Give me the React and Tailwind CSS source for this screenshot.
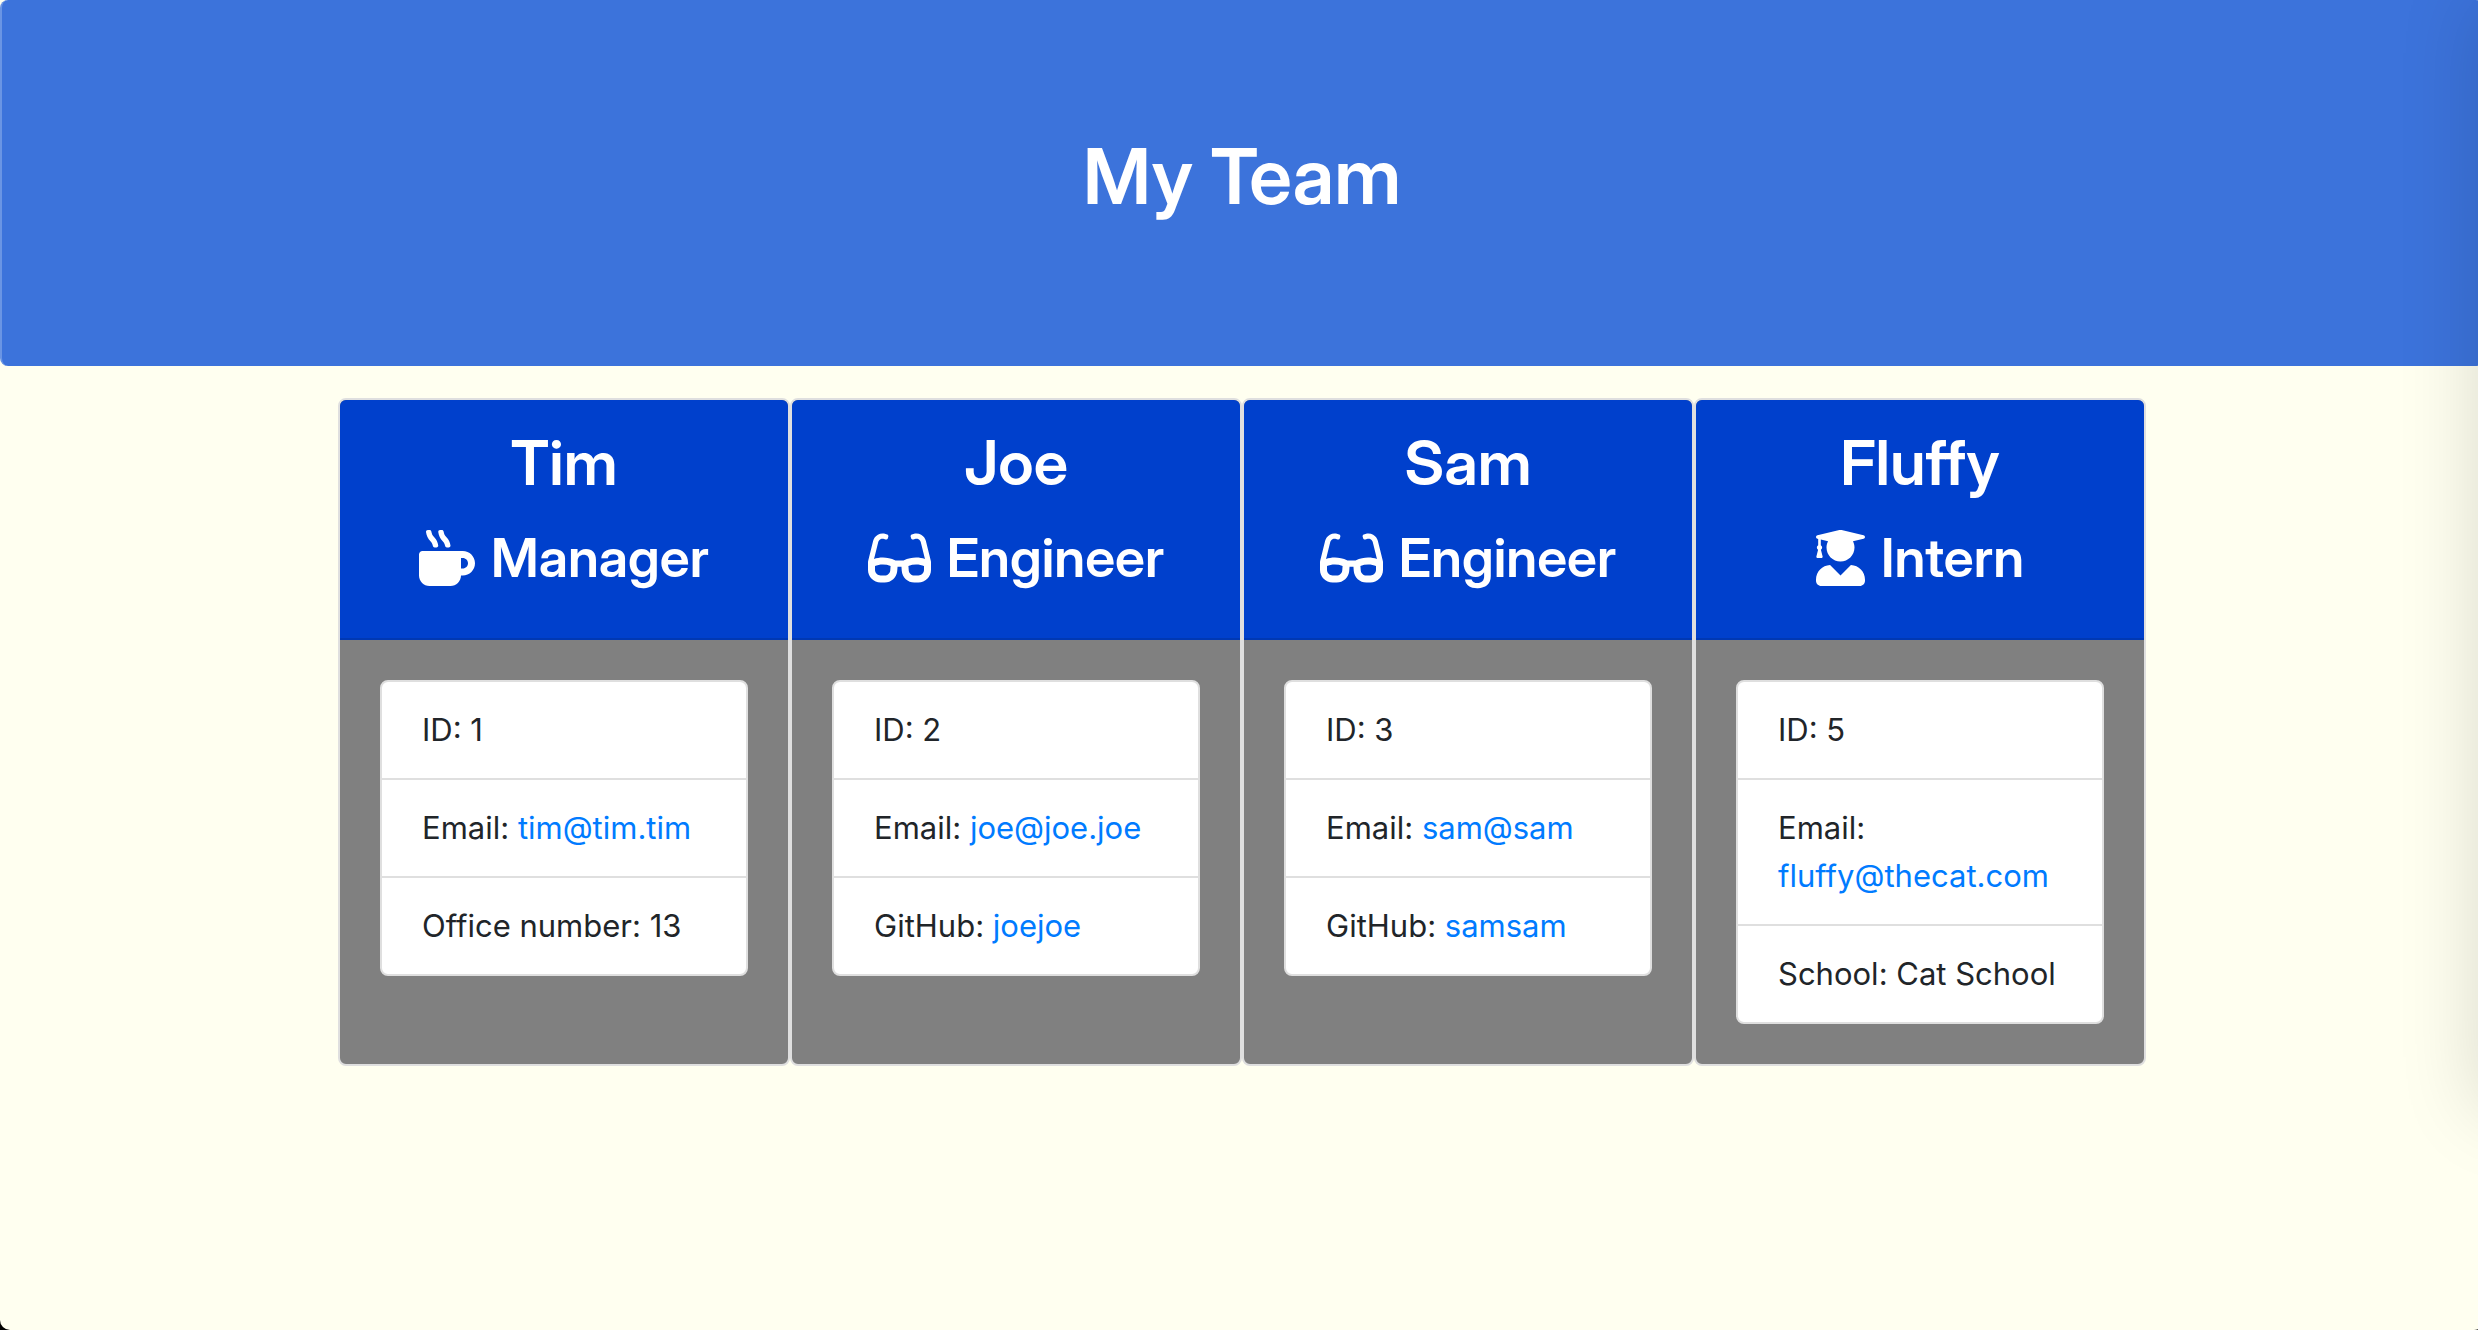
import React from "react";
import { FaMugHot, FaGlasses, FaUserGraduate } from "react-icons/fa";

const roles = {
  Manager: <FaMugHot className="h-14 w-14" aria-hidden="true" />,
  Engineer: <FaGlasses className="h-14 w-[63px]" aria-hidden="true" />,
  Intern: <FaUserGraduate className="h-14 w-[49px]" aria-hidden="true" />,
};

const team = [
  { name: "Tim", role: "Manager", id: 1, email: "tim@tim.tim", label: "Office number", value: "13" },
  { name: "Joe", role: "Engineer", id: 2, email: "joe@joe.joe", label: "GitHub", value: "joejoe", href: "https://github.com/joejoe" },
  { name: "Sam", role: "Engineer", id: 3, email: "sam@sam", label: "GitHub", value: "samsam", href: "https://github.com/samsam" },
  { name: "Fluffy", role: "Intern", id: 5, email: "fluffy@thecat.com", label: "School", value: "Cat School" },
];

function Card({ member }) {
  return (
    <article className="flex flex-col rounded-lg border-2 border-[#dfdfdf] bg-[#808080]">
      <header className="rounded-t-md border-b-2 border-[#0038b3] bg-[#0040cc] px-10 pt-6 pb-10 text-center font-['Inter_Display','Inter',sans-serif] font-semibold text-white">
        <h2 className="mb-4 text-[62px] leading-[78px]">{member.name}</h2>
        <h3 className="flex items-center justify-center gap-4 text-[54px] leading-[80px]">
          {roles[member.role]}
          {member.role}
        </h3>
      </header>
      <div className="p-10">
        <ul className="divide-y-2 divide-[#dfdfdf] rounded-lg border-2 border-[#dfdfdf] bg-white text-[31px] leading-[48px] text-[#212529]">
          <li className="px-10 py-6">ID: {member.id}</li>
          <li className="px-10 py-6">
            Email:{" "}
            <a className="text-[#007bff]" href={"mailto:" + member.email}>
              {member.email}
            </a>
          </li>
          <li className="px-10 py-6">
            {member.label}:{" "}
            {member.href ? (
              <a className="text-[#007bff]" href={member.href}>
                {member.value}
              </a>
            ) : (
              member.value
            )}
          </li>
        </ul>
      </div>
    </article>
  );
}

export default function App() {
  return (
    <div className="relative flex min-h-screen flex-col overflow-hidden bg-black font-['Inter','Liberation_Sans',sans-serif]">
      <div className="-mr-1.5 grow rounded-b-[10px] bg-[#fffff0]">
        <header className="mb-8 rounded-lg border-x-2 border-[#6a95e4] bg-[#3c73db] pt-32 pb-[142px] text-center">
          <h1 className="font-['Inter_Display','Inter',sans-serif] text-[77px] leading-[96px] font-semibold text-white">My Team</h1>
        </header>
        <main className="mx-auto grid max-w-[1808px] grid-cols-4">
          {team.map((member) => (
            <Card key={member.id} member={member} />
          ))}
        </main>
      </div>
      <div className="pointer-events-none absolute top-0 left-full h-[1110px] w-40 shadow-[0_0_80px_rgba(0,0,0,0.15)]" />
    </div>
  );
}
